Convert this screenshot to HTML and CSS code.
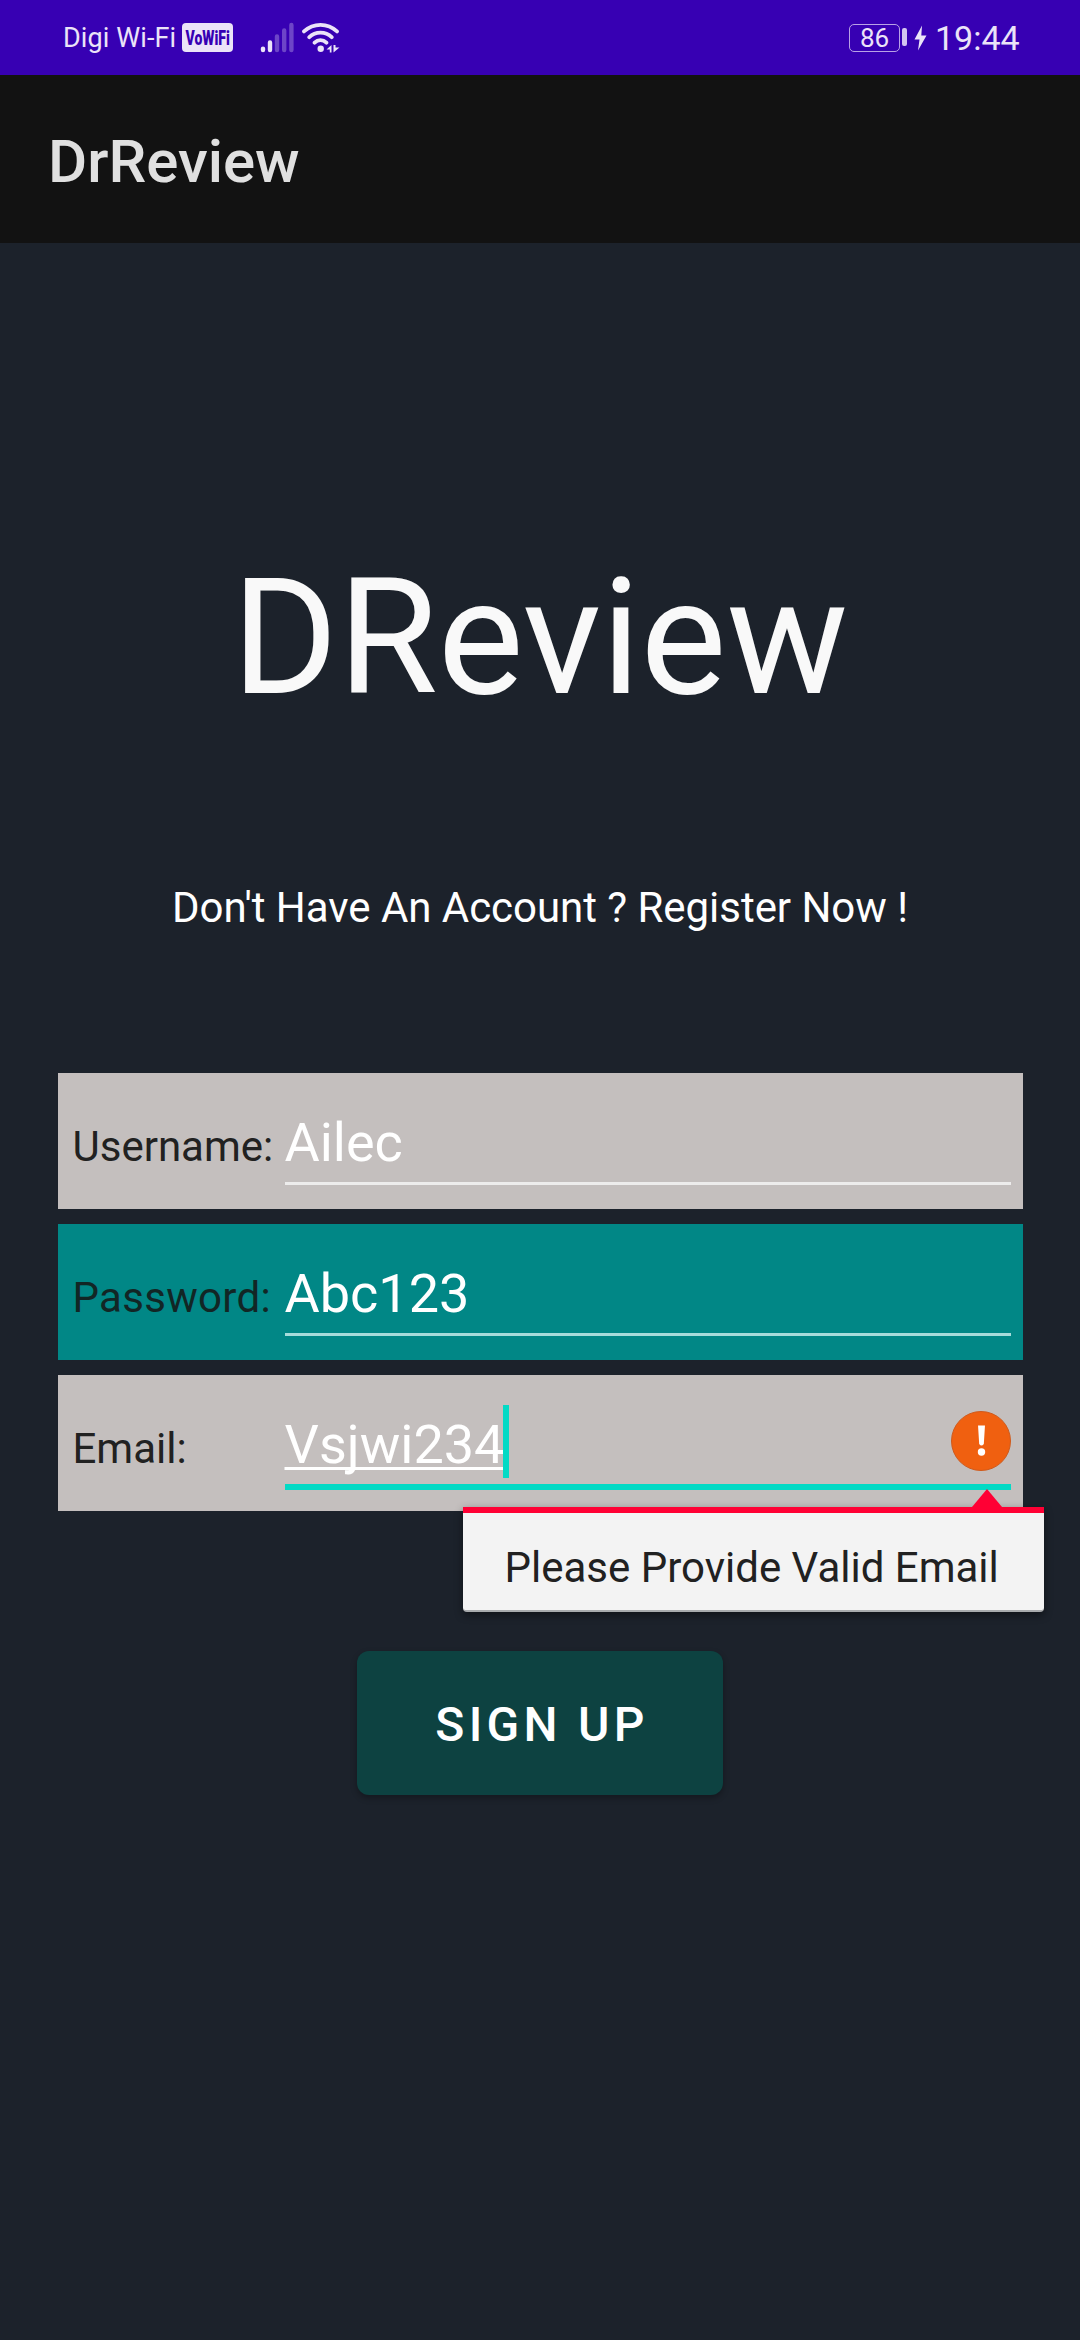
FILE: index.html
```html
<!DOCTYPE html>
<html lang="en">
<head>
<meta charset="utf-8">
<title>DrReview</title>
<link rel="stylesheet" href="styles.css">
</head>
<body>
<div class="status">
  <span class="carrier">Digi Wi-Fi</span>
  <span class="vowifi"><span class="vowifi-text">VoWiFi</span></span>
  <svg class="signal" width="34" height="32" viewBox="0 0 34 32" stroke="#ebe3f8" stroke-width="4.4" stroke-linecap="round">
    <path d="M3 26.6V28M10 20.5V28"/>
    <path d="M17 14.5V28M24.2 8.5V28M31.4 3V28" opacity=".3"/>
  </svg>
  <svg class="wifi" width="38" height="32" viewBox="0 0 38 32" fill="none" stroke="#ebe3f8" stroke-width="3.8" stroke-linecap="round">
    <path d="M2 9.4C11.5.7 25.5.7 35 9.4M7.3 15.2C13.5 9.2 23.5 9.2 29.7 15.2M12.6 20.7C16 17.3 21 17.3 24.400 20.7"/>
    <circle cx="18.700" cy="26.700" r="3.200" fill="#ebe3f8" stroke="none"/>
    <path d="M24.500 27.500L29.500 23V30.500H27.800V27.500ZM31.500 23V30.500L37.500 25.500H33.500V23Z" fill="#ebe3f8" stroke="none"/>
  </svg>
  <span class="battery">86</span>
  <span class="cap"></span>
  <svg class="bolt" width="13" height="26" viewBox="0 0 13 26"><path d="M8 .5L.5 14.500H5.500L4 25.500L12.500 10.500H7.300Z" fill="#ebe3f8"/></svg>
  <span class="time">19:44</span>
</div>
<header class="appbar">DrReview</header>
<main class="content">
  <h1 class="logo">DReview</h1>
  <p class="subtitle">Don't Have An Account ? Register Now !</p>
  <div class="form">
    <div class="row"><span class="label">Username:</span><div class="field">Ailec</div></div>
    <div class="row teal"><span class="label">Password:</span><div class="field">Abc123</div></div>
    <div class="row">
      <span class="label">Email:</span>
      <div class="field focused"><span class="typing">Vsjwi234</span>
        <svg class="alert" width="60" height="60" viewBox="0 0 60 60">
          <circle cx="30" cy="30" r="29.500" fill="#f06010" stroke="#cf5a1c"/>
          <path d="M27 14.500H34L32.800 33Q30.500 36 28.200 33Z" fill="#fff"/>
          <circle cx="30.500" cy="41" r="3.700" fill="#fff"/>
        </svg>
      </div>
      <div class="popup">
        <svg class="arrow" width="30" height="18" viewBox="0 0 30 18"><path d="M0 18L15 0L30 18Z" fill="#ff0034"/></svg>
        Please Provide Valid Email
      </div>
    </div>
  </div>
  <button class="signup">SIGN UP</button>
</main>
</body>
</html>
```
FILE: styles.css
```css
* { box-sizing: border-box; }
body {
  margin: 0;
  width: 1080px;
  height: 2340px;
  overflow: hidden;
  background: #1c222b;
  font-family: Roboto, sans-serif;
  display: flex;
  flex-direction: column;
}
.status {
  height: 75px;
  flex: none;
  display: flex;
  align-items: flex-start;
  background: #3700b3;
  color: #ebe3f8;
  padding-left: 63px;
  white-space: nowrap;
}
.carrier { width: 119px; font-size: 27px; line-height: 32px; margin-top: 22px; letter-spacing: .1px; }
.vowifi {
  width: 51px;
  height: 29px;
  margin-top: 23px;
  border-radius: 4px;
  background: #ebe3f8;
  color: #3700b3;
  font: 900 20px/30px Roboto, sans-serif;
  display: flex;
  justify-content: center;
}
.vowifi-text { transform: scaleX(.7); }
.signal { margin: 22px 0 0 27px; }
.wifi { margin: 22px 0 0 8px; }
.battery {
  width: 51px;
  height: 28px;
  margin: 24px 0 0 509px;
  border: 1.5px solid #b9a2e6;
  border-radius: 5px;
  font-size: 26px;
  line-height: 26px;
  text-align: center;
}
.cap { width: 5px; height: 18px; margin: 28px 0 0 2px; border-radius: 2px; background: #d3c4f0; }
.bolt { margin: 25px 0 0 7px; }
.time { font-size: 34px; line-height: 40px; margin: 18px 0 0 8px; }
.appbar {
  height: 168px;
  flex: none;
  padding: 5px 48px 0;
  background: #121212;
  color: #e0e0e0;
  font-size: 60px;
  font-weight: 500;
  line-height: 163px;
}
.content { display: flex; flex-direction: column; align-items: center; }
.logo { margin: 300px 0 0; font-size: 162px; font-weight: 400; line-height: 190px; color: #f9f9f9; }
.subtitle { margin: 150px 0 0; font-size: 42px; line-height: 50px; letter-spacing: -.04px; color: #fff; }
.form { width: 965px; margin-top: 140px; display: grid; gap: 15px; }
.row {
  position: relative;
  height: 136px;
  display: flex;
  align-items: baseline;
  padding: 33px 12px 0 15px;
  background: #c4bfbe;
  color: #212121;
}
.teal { background: #018786; color: #122625; }
.label { width: 212px; font-size: 42px; }
.teal .label { letter-spacing: .3px; }
.field {
  position: relative;
  width: 726px;
  height: 79px;
  border-bottom: 3px solid rgba(255, 255, 255, .7);
  color: #fff;
  font-size: 54px;
  line-height: 73px;
}
.teal .field { border-color: #a6dcdb; }
.focused { height: 82px; border-bottom: 6px solid #03dac5; }
.typing {
  position: relative;
  text-decoration: underline;
  text-decoration-thickness: 3px;
  text-underline-offset: 4px;
  text-decoration-skip-ink: none;
}
.typing::after {
  content: "";
  position: absolute;
  right: -5px;
  top: -8px;
  width: 6px;
  height: 73px;
  background: #03dac5;
}
.alert { position: absolute; right: 0; top: 3px; }
.popup {
  position: absolute;
  left: 405px;
  top: 132px;
  width: 581px;
  height: 105px;
  border-top: 6px solid #ff0034;
  border-bottom: 2px solid #a9abad;
  border-radius: 0 0 4px 4px;
  background: #f3f3f3;
  box-shadow: 0 3px 8px rgba(0, 0, 0, .45);
  font-size: 42px;
  line-height: 109px;
  padding-left: 42px;
  white-space: nowrap;
}
.arrow { position: absolute; left: 509px; top: -24px; }
.signup {
  width: 366px;
  height: 144px;
  margin-top: 140px;
  padding: 4px 0 0 4px;
  border: 0;
  border-radius: 12px;
  background: #0d4241;
  box-shadow: 0 3px 6px rgba(0, 0, 0, .3);
  color: #fff;
  font: 500 48px/140px Roboto, sans-serif;
  letter-spacing: 4.29px;
}
```
